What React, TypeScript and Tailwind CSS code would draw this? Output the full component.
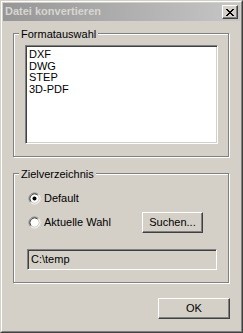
import React from "react";

const FORMATS = ["DXF", "DWG", "STEP", "3D-PDF"];

function Radio({ checked }: { checked?: boolean }) {
  return (
    <svg width="13" height="13" viewBox="0 0 13 13" className="shrink-0">
      <circle cx="6.5" cy="6.5" r="4.5" fill="#fff" />
      <path d="M2.61 10.39 A5.5 5.5 0 0 1 10.39 2.61" stroke="#808080" fill="none" />
      <path d="M10.39 2.61 A5.5 5.5 0 0 1 2.61 10.39" stroke="#fff" fill="none" />
      <path d="M3.32 9.68 A4.5 4.5 0 0 1 9.68 3.32" stroke="#404040" fill="none" />
      <path d="M9.68 3.32 A4.5 4.5 0 0 1 3.32 9.68" stroke="#d4d0c8" fill="none" />
      {checked && <circle cx="6.5" cy="6.5" r="2" fill="#000" />}
    </svg>
  );
}

function CloseGlyph() {
  const rows = ["11000011", "01100110", "00111100", "00011000", "00111100", "01100110", "11000011"];
  return (
    <svg width="8" height="7" viewBox="0 0 8 7" shapeRendering="crispEdges">
      {rows.map((r, y) =>
        r.split("").map((c, x) => (c === "1" ? <rect key={x + "-" + y} x={x} y={y} width="1" height="1" fill="#000" /> : null))
      )}
    </svg>
  );
}

function GroupBox({ label, className, children }: { label: string; className: string; children: React.ReactNode }) {
  return (
    <div className={"relative ml-[10px] w-[216px] border border-[#808080] shadow-[1px_1px_0_#fff,inset_1px_1px_0_#fff] " + className}>
      <span className="absolute -top-[6px] left-[5px] bg-[#d4d0c8] px-[2px] leading-[13px]">{label}</span>
      {children}
    </div>
  );
}

function Button({ children, className }: { children: React.ReactNode; className: string }) {
  return (
    <div className={"flex items-center justify-center border border-t-white border-l-white border-r-[#404040] border-b-[#404040] shadow-[inset_-1px_-1px_0_#808080] " + className}>
      {children}
    </div>
  );
}

export default function App() {
  return (
    <div className="w-[243px] h-[333px] border border-t-[#d4d0c8] border-l-[#d4d0c8] border-r-[#404040] border-b-[#404040] bg-[#d4d0c8] font-['Liberation_Sans',Arial,sans-serif] text-[11px] leading-[13px] text-black">
      <div className="h-full border border-t-white border-l-white border-r-[#808080] border-b-[#808080] p-[1px]">
        {/* title bar */}
        <div className="flex h-[18px] items-start justify-between bg-gradient-to-r from-[#969696] to-[#c6c6c6] pl-[2px] pr-[2px]">
          <span className="mt-[2px] font-bold text-[#d8d6d0]">Datei konvertieren</span>
          <div className="mt-[2px] flex h-[14px] w-[16px] items-center justify-center border border-t-white border-l-white border-r-[#404040] border-b-[#404040] bg-[#d4d0c8] shadow-[inset_-1px_-1px_0_#808080]">
            <CloseGlyph />
          </div>
        </div>

        <GroupBox label="Formatauswahl" className="mt-[12px] h-[124px] pt-[11px] pl-[11px]">
          <div className="h-[99px] w-[193px] border border-t-[#808080] border-l-[#808080] border-r-white border-b-white bg-white pt-[3px] pl-[3px] shadow-[inset_1px_1px_0_#404040,inset_-1px_-1px_0_#d4d0c8]">
            {FORMATS.map((f) => (
              <div key={f} className="leading-[11.6px]">
                {f}
              </div>
            ))}
          </div>
        </GroupBox>

        <GroupBox label="Zielverzeichnis" className="mt-[16px] h-[110px] pt-[18px]">
          <div className="flex h-[13px] items-center gap-[3px] pl-[14px]">
            <Radio checked />
            <span>Default</span>
          </div>
          <div className="mt-[7px] flex h-[21px] items-center pl-[14px]">
            <div className="flex w-[114px] items-center gap-[3px]">
              <Radio />
              <span>Aktuelle Wahl</span>
            </div>
            <Button className="h-[21px] w-[61px]">Suchen...</Button>
          </div>
          <div className="mt-[16px] ml-[13px] flex h-[21px] w-[190px] items-center border border-t-[#808080] border-l-[#808080] border-r-white border-b-white pl-[3px] shadow-[inset_1px_1px_0_#404040,inset_-1px_-1px_0_#d4d0c8]">
            C:\temp
          </div>
        </GroupBox>

        <div className="mt-[15px] flex justify-end pr-[10px]">
          <Button className="h-[21px] w-[72px]">OK</Button>
        </div>
      </div>
    </div>
  );
}
